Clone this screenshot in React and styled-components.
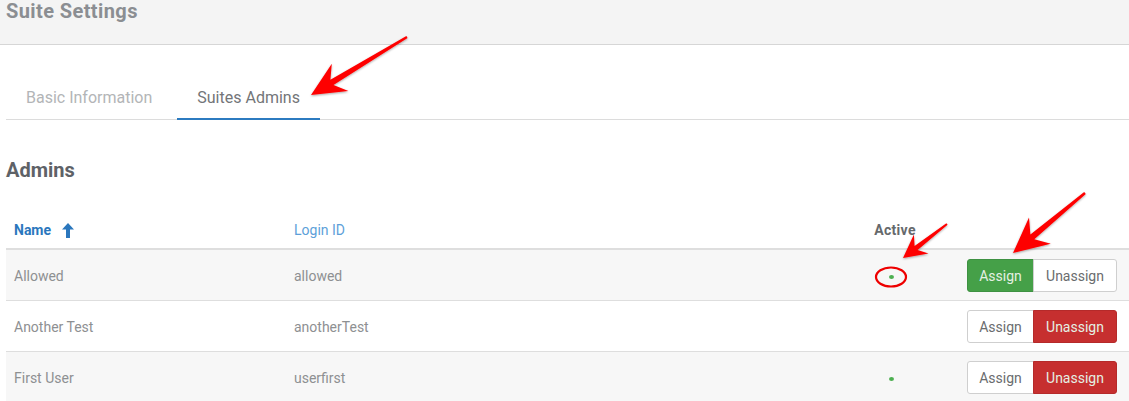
import styled, { createGlobalStyle } from "styled-components";

const GlobalStyle = createGlobalStyle`
  html, body {
    margin: 0;
    padding: 0;
    background: #fff;
    font-family: Roboto, "Liberation Sans", sans-serif;
  }
`;

const Page = styled.div`
  position: relative;
  width: 1129px;
  height: 401px;
  overflow: hidden;
`;

const TopBar = styled.div`
  height: 44px;
  background: #f4f4f4;
  border-bottom: 1px solid #d6d6d6;
  padding: 0 6px;
`;

const Title = styled.h1`
  margin: 0;
  font-size: 20px;
  font-weight: 700;
  line-height: 22px;
  color: #8b8e92;
  letter-spacing: 0.4px;
`;

const Body = styled.div`
  padding: 0 0 0 6px;
`;

const Tabs = styled.div`
  display: flex;
  margin-top: 35px;
  border-bottom: 1px solid #dcdcdc;
`;

const Tab = styled.div`
  height: 40px;
  padding: 4px 20px 0;
  margin-right: ${(p) => (p.$active ? "0" : "5px")};
  box-sizing: border-box;
  font-size: 16px;
  line-height: 28px;
  color: ${(p) => (p.$active ? "#737578" : "#b3b5b7")};
  border-bottom: 2px solid ${(p) => (p.$active ? "#2c7bc0" : "transparent")};
  margin-bottom: -1px;
`;

const Heading = styled.h2`
  margin: 38px 0 0;
  font-size: 20px;
  font-weight: 700;
  line-height: 24px;
  color: #5e6267;
`;

const Table = styled.div`
  margin-top: 30px;
`;

const Row = styled.div`
  display: grid;
  grid-template-columns: 280px 1fr 80px 198px;
  align-items: center;
  height: ${(p) => (p.$head ? "36px" : "50px")};
  background: ${(p) => (p.$striped ? "#f7f7f7" : "#fff")};
  border-bottom: ${(p) => (p.$head ? "2px solid #dedede" : "1px solid #dedede")};
`;

const HeadCell = styled.div`
  padding-left: 8px;
  font-size: 14px;
  font-weight: ${(p) => (p.$bold ? 700 : 400)};
  color: ${(p) => p.$color};
  display: flex;
  align-items: center;
  gap: 11px;
  justify-content: ${(p) => (p.$center ? "center" : "flex-start")};
  letter-spacing: ${(p) => (p.$center ? "0.3px" : "0")};
`;

const Cell = styled.div`
  padding-left: 8px;
  padding-top: 2px;
  font-size: 14px;
  color: #8e9092;
`;

const DotCell = styled.div`
  display: flex;
  justify-content: center;
  padding-top: 3px;
`;

const Dot = styled.span`
  width: 5px;
  height: 4px;
  border-radius: 50%;
  background: #4caf50;
`;

const Actions = styled.div`
  display: flex;
  justify-content: flex-end;
  padding-right: 12px;
  padding-top: 1px;
`;

const Btn = styled.button`
  height: 33px;
  box-sizing: border-box;
  font-family: inherit;
  font-size: 14px;
  padding: 0;
  width: ${(p) => p.$w}px;
  border: 1px solid ${(p) => (p.$on === "green" ? "#3e9142" : p.$on === "red" ? "#b52a2a" : "#cfcfcf")};
  background: ${(p) => (p.$on === "green" ? "#45a048" : p.$on === "red" ? "#c62f2f" : "#fff")};
  color: ${(p) => (p.$on ? "#e4f0e4" : "#6a6c6e")};
  border-radius: ${(p) => (p.$first ? "3px 0 0 3px" : "0 3px 3px 0")};
  margin-left: ${(p) => (p.$first ? "0" : "-1px")};
`;

const Overlay = styled.svg`
  position: absolute;
  left: 0;
  top: 0;
  pointer-events: none;
`;

const arrowPoints = (tx, ty, px, py, headLen, hw, w0, w1) => {
  const len = Math.hypot(px - tx, py - ty);
  const ux = (px - tx) / len;
  const uy = (py - ty) / len;
  const nx = -uy;
  const ny = ux;
  const bx = px - ux * headLen * 0.72;
  const by = py - uy * headLen * 0.72;
  const wx = px - ux * headLen;
  const wy = py - uy * headLen;
  const pts = [
    [tx + (nx * w0) / 2, ty + (ny * w0) / 2],
    [bx + (nx * w1) / 2, by + (ny * w1) / 2],
    [wx + nx * hw, wy + ny * hw],
    [px, py],
    [wx - nx * hw, wy - ny * hw],
    [bx - (nx * w1) / 2, by - (ny * w1) / 2],
    [tx - (nx * w0) / 2, ty - (ny * w0) / 2],
  ];
  return pts.map((p) => p.map((v) => v.toFixed(1)).join(",")).join(" ");
};

const arrows = [
  [407, 37, 311, 95, 34, 16, 2.5, 6],
  [947, 224, 903, 258, 23, 12, 2, 5],
  [1085, 193, 1013, 253, 35, 17, 2.5, 6],
];

const admins = [
  { name: "Allowed", login: "allowed", active: true, assigned: true },
  { name: "Another Test", login: "anotherTest", active: false, assigned: false },
  { name: "First User", login: "userfirst", active: true, assigned: false },
];

export default function App() {
  return (
    <Page>
      <GlobalStyle />
      <TopBar>
        <Title>Suite Settings</Title>
      </TopBar>
      <Body>
        <Tabs>
          <Tab>Basic Information</Tab>
          <Tab $active>Suites Admins</Tab>
        </Tabs>
        <Heading>Admins</Heading>
        <Table>
          <Row $head>
            <HeadCell $bold $color="#2b77bd">
              Name
              <svg width="12" height="15" viewBox="0 0 12 15">
                <path d="M6 0 L12 6.5 H8 V15 H4 V6.5 H0 Z" fill="#2b77bd" />
              </svg>
            </HeadCell>
            <HeadCell $color="#5d9fd9">Login ID</HeadCell>
            <HeadCell $bold $center $color="#66696c">Active</HeadCell>
            <div />
          </Row>
          {admins.map((a, i) => (
            <Row key={a.login} $striped={i % 2 === 0}>
              <Cell>{a.name}</Cell>
              <Cell>{a.login}</Cell>
              <DotCell>{a.active && <Dot />}</DotCell>
              <Actions>
                <Btn $first $w={67} $on={a.assigned ? "green" : undefined}>Assign</Btn>
                <Btn $w={84} $on={a.assigned ? undefined : "red"}>Unassign</Btn>
              </Actions>
            </Row>
          ))}
        </Table>
      </Body>
      <Overlay width="1129" height="401">
        <defs>
          <filter id="shadow" x="-20%" y="-20%" width="140%" height="140%">
            <feDropShadow dx="0" dy="1" stdDeviation="1" floodColor="#000" floodOpacity="0.35" />
          </filter>
        </defs>
        {arrows.map((a, i) => (
          <polygon key={i} points={arrowPoints(...a)} fill="#fe0000" filter="url(#shadow)" />
        ))}
        <ellipse cx="891" cy="277" rx="15" ry="9.5" fill="none" stroke="#ee0000" strokeWidth="2.2" />
      </Overlay>
    </Page>
  );
}
